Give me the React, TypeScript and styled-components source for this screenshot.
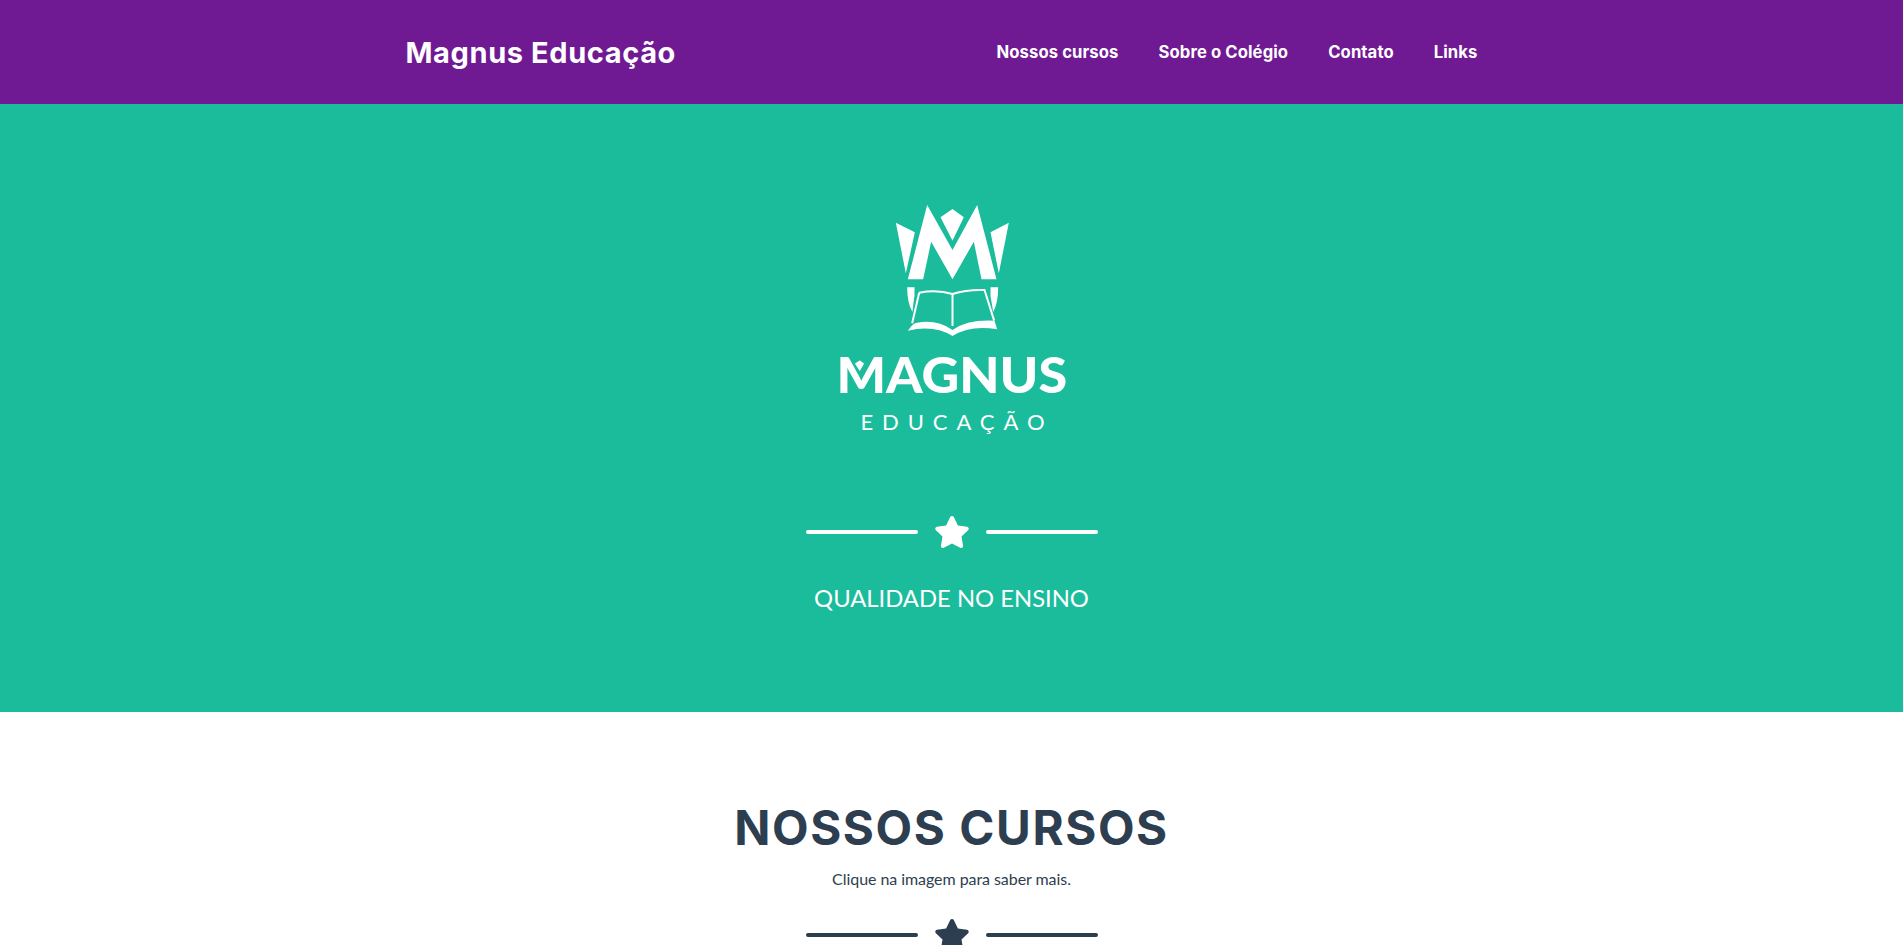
import * as React from 'react';
import styled, { createGlobalStyle } from 'styled-components';
import { FaStar } from 'react-icons/fa';

const GlobalStyle = createGlobalStyle`
  html, body {
    margin: 0;
    height: 945px;
    overflow: hidden;
    background-color: #fff;
    font-family: Lato, "Liberation Sans", sans-serif;
    color: #2c3e50;
  }
`;

const NavBar = styled.nav`
  background-color: #6f1a93;
  height: 104px;
  display: flex;
  justify-content: center;
`;

const NavContainer = styled.div`
  width: 1140px;
  box-sizing: border-box;
  padding: 0 24px;
  display: flex;
  align-items: center;
  justify-content: space-between;
`;

const Brand = styled.a`
  font-family: Inter, "Liberation Sans", sans-serif;
  font-weight: 700;
  font-size: 29px;
  letter-spacing: 0.6px;
  color: #fff;
`;

const NavList = styled.ul`
  list-style: none;
  margin: 0;
  padding: 0;
  display: flex;
`;

const NavLink = styled.a`
  display: block;
  padding: 0 20px;
  font-family: Inter, "Liberation Sans", sans-serif;
  font-weight: 700;
  font-size: 16.65px;
  letter-spacing: 0.1px;
  color: #fff;
`;

const Hero = styled.header`
  background-color: #1abc9c;
  height: 608px;
  box-sizing: border-box;
  padding-top: 86px;
  display: flex;
  flex-direction: column;
  align-items: center;
  color: #fff;
`;

const LogoSvg = styled.svg`
  display: block;
  width: 300px;
  height: 250px;
`;

const Divider = styled.div<{ $tone: string }>`
  display: flex;
  align-items: center;
  justify-content: center;
  gap: 16px;
  color: ${({ $tone }) => $tone};
  margin-top: ${({ $tone }) => ($tone === '#fff' ? '76px' : '28px')};

  svg {
    width: 36px;
    height: 32px;
  }
`;

const DividerLine = styled.span`
  display: block;
  width: 112px;
  height: 4px;
  border-radius: 16px;
  background-color: currentColor;
`;

const Subheading = styled.h2`
  margin: 32px 0 0;
  font-weight: 400;
  font-size: 23.8px;
  line-height: 36px;
  text-transform: uppercase;
`;

const Section = styled.section`
  padding-top: 87px;
  display: flex;
  flex-direction: column;
  align-items: center;
`;

const SectionTitle = styled.h1`
  margin: 0;
  font-family: Inter, "Liberation Sans", sans-serif;
  font-weight: 750;
  font-size: 47.5px;
  line-height: 58px;
  letter-spacing: 1.6px;
  color: #2c3e50;
`;

const SectionHint = styled.p`
  margin: 10px 0 0;
  font-size: 16px;
  line-height: 24px;
  letter-spacing: -0.06px;
`;

const links = ['Nossos cursos', 'Sobre o Colégio', 'Contato', 'Links'];

// emblem drawn in the coordinates of a 3x crop of the logo
const Logo = () => (
  <LogoSvg viewBox="4.5 0 900 750" aria-label="Magnus Educação">
    <g fill="#fff">
      <polygon points="322,268 380,45 456,180 530,45 588,268 543,268 520,155 456,268 392,155 368,268" />
      <polygon points="420,82 456,57 490,82 456,152" />
      <polygon points="286,98 343,127 316,250" />
      <polygon points="625,98 570,127 595,250" />
      <path d="M320 292H342V318Q338 340 336 366Q320 340 320 292Z" />
      <path d="M593 292H570V318Q574 340 578 366Q593 340 593 292Z" />
      <path d="M322 422Q338 398 350 398Q410 388 456 420Q500 388 582 392L590 418Q510 404 456 438Q400 404 322 422Z" />
    </g>
    <g fill="none" stroke="#fff" strokeWidth="6">
      <path d="M356 308Q410 298 456 312Q500 298 552 300L581 392" />
      <path d="M356 308L335 400" />
      <path d="M456 312V408" />
    </g>
    <text
      x="108"
      y="609"
      textLength="692"
      lengthAdjust="spacingAndGlyphs"
      fontFamily="Lato, sans-serif"
      fontWeight="900"
      fontSize="148"
      fill="#fff"
    >
      MAGNUS
    </text>
    <polygon points="160,520 178,508 194,520 178,548" fill="#fff" stroke="#1abc9c" strokeWidth="5" />
    <text
      x="180"
      y="720"
      textLength="552"
      fontFamily="Lato, sans-serif"
      fontWeight="400"
      fontSize="66"
      fill="#fff"
    >
      EDUCAÇÃO
    </text>
  </LogoSvg>
);

const StarDivider = ({ tone }: { tone: string }) => (
  <Divider $tone={tone}>
    <DividerLine />
    <FaStar />
    <DividerLine />
  </Divider>
);

const App = () => (
  <>
    <GlobalStyle />
    <NavBar>
      <NavContainer>
        <Brand>Magnus Educação</Brand>
        <NavList>
          {links.map((link) => (
            <li key={link}>
              <NavLink>{link}</NavLink>
            </li>
          ))}
        </NavList>
      </NavContainer>
    </NavBar>
    <Hero>
      <Logo />
      <StarDivider tone="#fff" />
      <Subheading>Qualidade no ensino</Subheading>
    </Hero>
    <Section>
      <SectionTitle>NOSSOS CURSOS</SectionTitle>
      <SectionHint>Clique na imagem para saber mais.</SectionHint>
      <StarDivider tone="#2c3e50" />
    </Section>
  </>
);

export default App;
